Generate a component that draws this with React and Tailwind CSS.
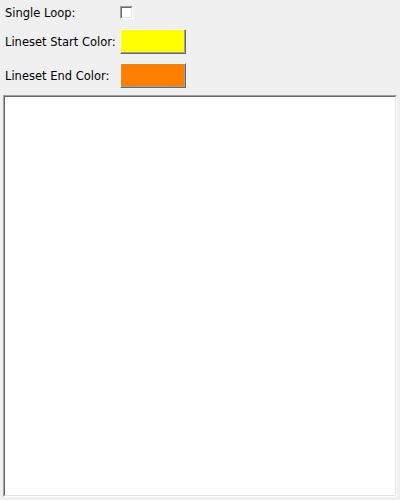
import React from 'react';

function ColorButton({ color }) {
  return (
    <div className="w-[66px] h-[25px] border-t border-l border-white border-r border-b border-r-[#696969] border-b-[#696969]">
      <div className={`w-full h-full border-r border-b border-[#a0a0a0] ${color}`} />
    </div>
  );
}

export default function App() {
  return (
    <div
      className="h-screen flex flex-col bg-[#f0f0f0] text-[11.5px] text-black"
      style={{ fontFamily: 'Tahoma, "DejaVu Sans", sans-serif' }}
    >
      <div className="flex flex-col gap-[9px] pt-[4px] px-[5px]">
        <div className="flex items-center h-[16px]">
          <div className="w-[115px] pt-[4px]">Single Loop:</div>
          <div className="w-[13px] h-[13px] border-t border-l border-[#a0a0a0] border-r border-b border-r-white border-b-white">
            <div className="w-full h-full bg-white border-t border-l border-[#696969] border-r border-b border-r-[#e3e3e3] border-b-[#e3e3e3]" />
          </div>
        </div>
        <div className="flex items-center h-[25px]">
          <div className="w-[115px] pt-[2px]">Lineset Start Color:</div>
          <ColorButton color="bg-[#ffff00]" />
        </div>
        <div className="flex items-center h-[25px]">
          <div className="w-[115px] pt-[2px]">Lineset End Color:</div>
          <ColorButton color="bg-[#ff8000]" />
        </div>
      </div>
      <div className="flex-1 flex flex-col mt-[7px] mx-[3px] mb-[3px] border-t border-l border-[#a0a0a0] border-r border-b border-r-white border-b-white">
        <div className="flex-1 bg-white border-t border-l border-[#696969] border-r border-b border-r-[#e3e3e3] border-b-[#e3e3e3]" />
      </div>
    </div>
  );
}
